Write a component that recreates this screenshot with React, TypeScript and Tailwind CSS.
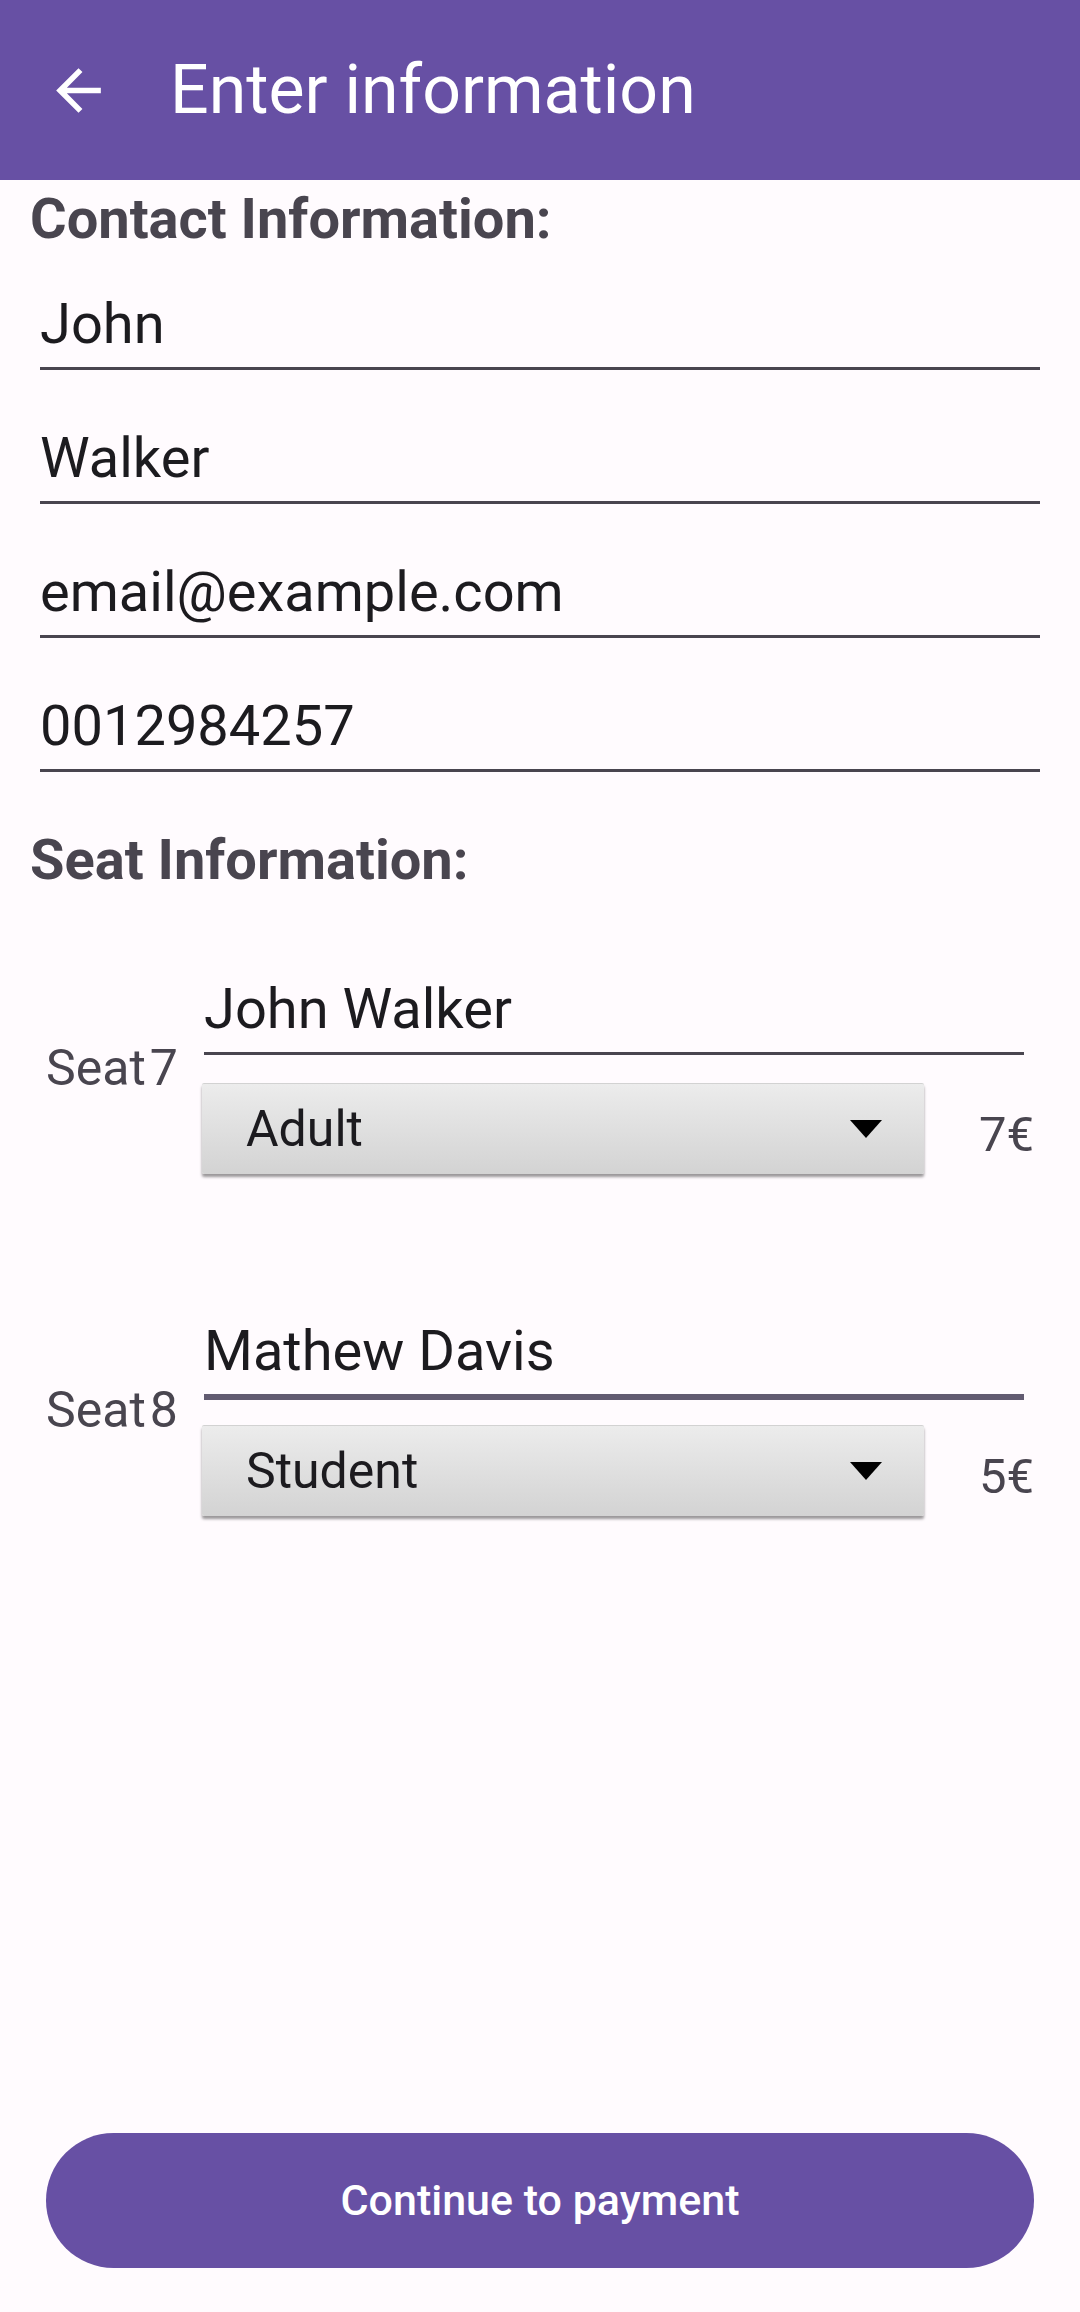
import React from "react";

const CONTACT_FIELDS = ["John", "Walker", "email@example.com", "0012984257"];

function ArrowBack() {
  return (
    <svg viewBox="0 0 24 24" className="size-[67px] fill-white" aria-hidden>
      <path d="M20 11H7.83l5.59-5.59L12 4l-8 8 8 8 1.41-1.41L7.83 13H20v-2z" />
    </svg>
  );
}

function TextField({ value }: { value: string }) {
  return (
    <div className="ml-[10px] border-b-[3px] border-[#49454F] pb-[10px] text-[56px] leading-[66px] text-[#1C1B1F]">
      {value}
    </div>
  );
}

function Spinner({ value }: { value: string }) {
  return (
    <div className="flex h-[91px] w-[722px] items-center justify-between rounded-[2px] border-t border-[#d2d2d2] bg-gradient-to-b from-[#ececec] to-[#d3d3d3] pl-[44px] pr-[42px] shadow-[0_3px_3px_rgba(0,0,0,0.4)]">
      <span className="text-[50px] leading-none text-[#1C1B1F]">{value}</span>
      <span className="h-0 w-0 border-x-[16px] border-t-[18px] border-x-transparent border-t-black" />
    </div>
  );
}

function SeatRow({
  seat,
  name,
  type,
  price,
  focused,
}: {
  seat: number;
  name: string;
  type: string;
  price: string;
  focused?: boolean;
}) {
  return (
    <div className="flex items-center">
      <div className="flex w-[172px] items-baseline pb-[14px] pl-[16px] text-[50px] leading-none text-[#49454F]">
        <span>Seat</span>
        <span className="ml-[4px]">{seat}</span>
      </div>
      <div className="flex flex-col">
        <div
          className={
            focused
              ? "ml-[2px] w-[820px] border-b-[6px] border-[#625B71] pb-[10px] text-[56px] leading-[66px] text-[#1C1B1F]"
              : "ml-[2px] w-[820px] border-b-[3px] border-[#49454F] pb-[10px] text-[56px] leading-[66px] text-[#1C1B1F]"
          }
        >
          {name}
        </div>
        <div className={focused ? "mt-[25px] flex items-center" : "mt-[28px] flex items-center"}>
          <Spinner value={type} />
          <span className="ml-[55px] pt-[12px] text-[49px] leading-none text-[#49454F]">{price}</span>
        </div>
      </div>
    </div>
  );
}

export default function App() {
  return (
    <div className="flex min-h-[2312px] w-[1080px] flex-col bg-[#FFFBFE] font-['Roboto',sans-serif]">
      <header className="flex h-[180px] shrink-0 items-center bg-[#6750A4] pl-[45px]">
        <ArrowBack />
        <h1 className="ml-[58px] text-[68px] font-normal leading-none text-white">Enter information</h1>
      </header>

      <main className="flex flex-1 flex-col pl-[30px] pr-[40px] pt-[6px]">
        <h2 className="text-[56px] font-bold leading-[66px] text-[#49454F]">Contact Information:</h2>
        <div className="mt-[39px] flex flex-col gap-[55px]">
          {CONTACT_FIELDS.map((f) => (
            <TextField key={f} value={f} />
          ))}
        </div>

        <h2 className="mt-[55px] text-[56px] font-bold leading-[66px] text-[#49454F]">Seat Information:</h2>

        <div className="mt-[83px] flex flex-col gap-[144px]">
          <SeatRow seat={7} name="John Walker" type="Adult" price="7€" />
          <SeatRow seat={8} name="Mathew Davis" type="Student" price="5€" focused />
        </div>

        <div className="mt-auto pb-[44px] pl-[16px] pr-[6px]">
          <button className="flex h-[135px] w-full items-center justify-center rounded-full bg-[#6750A4] text-[43px] font-medium text-white">
            Continue to payment
          </button>
        </div>
      </main>
    </div>
  );
}
